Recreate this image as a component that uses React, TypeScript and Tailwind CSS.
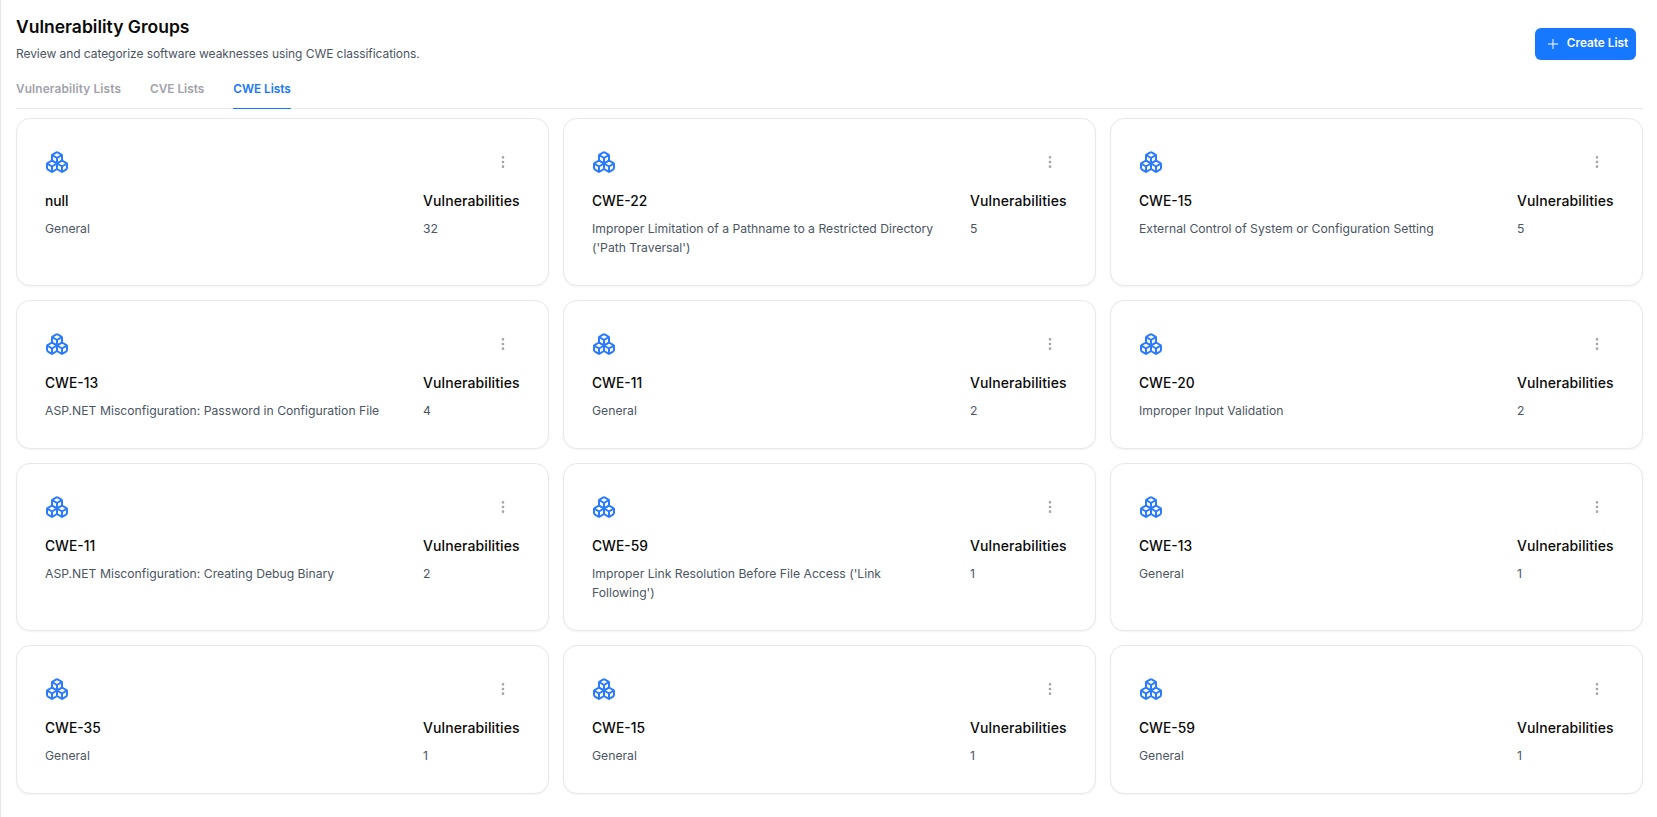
import { Boxes, MoreVertical, Plus } from "lucide-react";

interface CweCard {
  name: string;
  description: string;
  count: number;
}

const CARDS: CweCard[] = [
  { name: "null", description: "General", count: 32 },
  {
    name: "CWE-22",
    description:
      "Improper Limitation of a Pathname to a Restricted Directory ('Path Traversal')",
    count: 5,
  },
  {
    name: "CWE-15",
    description: "External Control of System or Configuration Setting",
    count: 5,
  },
  {
    name: "CWE-13",
    description: "ASP.NET Misconfiguration: Password in Configuration File",
    count: 4,
  },
  { name: "CWE-11", description: "General", count: 2 },
  { name: "CWE-20", description: "Improper Input Validation", count: 2 },
  {
    name: "CWE-11",
    description: "ASP.NET Misconfiguration: Creating Debug Binary",
    count: 2,
  },
  {
    name: "CWE-59",
    description:
      "Improper Link Resolution Before File Access ('Link Following')",
    count: 1,
  },
  { name: "CWE-13", description: "General", count: 1 },
  { name: "CWE-35", description: "General", count: 1 },
  { name: "CWE-15", description: "General", count: 1 },
  { name: "CWE-59", description: "General", count: 1 },
];

function Card({ card }: { card: CweCard }) {
  return (
    <div className="bg-white rounded-[14px] border border-[#e8e8e8] shadow-[0_1px_2px_rgba(0,0,0,0.05)] pt-[31px] pb-[28px] pl-[28px] pr-[29px]">
      {/* Header */}
      <div className="flex items-start justify-between h-[24px] mb-[15px]">
        <Boxes size={24} strokeWidth={2} className="text-[#2b7bff]" />
        <MoreVertical
          size={16}
          strokeWidth={2}
          className="text-[#a3a3ab] mr-[8px] mt-[4px]"
        />
      </div>

      {/* Body */}
      <div className="flex justify-between">
        <div className="w-[350px]">
          <p className="text-[13.8px] leading-[24px] font-medium text-[#0a0a0a]">
            {card.name}
          </p>
          <p className="text-[12.2px] leading-[19px] text-[#4b5563] mt-[6px]">
            {card.description}
          </p>
        </div>
        <div className="w-[96px]">
          <p className="text-[14px] tracking-[0.1px] leading-[24px] font-medium text-[#0a0a0a] whitespace-nowrap">
            Vulnerabilities
          </p>
          <p className="text-[12.2px] leading-[19px] text-[#4b5563] mt-[6px]">
            {card.count}
          </p>
        </div>
      </div>
    </div>
  );
}

export default function App() {
  return (
    <div className="min-h-[817px] bg-white border-l border-[#e5e7eb] pl-[15px] pr-[14px] pt-[28px] font-['Inter',sans-serif]">
      {/* Header */}
      <div className="flex items-start justify-between pr-[7px]">
        <div>
          <h1 className="text-[17.5px] leading-[24px] font-semibold text-[#0a0a0a] -mt-[13px]">
            Vulnerability Groups
          </h1>
          <p className="text-[12px] tracking-[-0.06px] leading-[20px] text-[#4b5563] mt-[5px]">
            Review and categorize software weaknesses using CWE classifications.
          </p>
        </div>
        <button className="flex items-center gap-[6px] h-[32px] w-[101px] pl-[2px] justify-center rounded-[6px] bg-[#1677ff] text-white text-[11.8px] font-semibold">
          <Plus size={16} strokeWidth={1.5} />
          Create List
        </button>
      </div>

      {/* Tabs */}
      <div className="flex gap-[29px] border-b border-[#e8e8e8] h-[48px] -mt-[3px] text-[11.8px] font-semibold">
        <span className="text-[#a1a1aa] pt-[20px] tracking-[0.15px]">Vulnerability Lists</span>
        <span className="text-[#a1a1aa] pt-[20px]">CVE Lists</span>
        <span className="text-[#1677ff] pt-[20px] h-[48px] border-b border-[#1677ff]">
          CWE Lists
        </span>
      </div>

      {/* Cards */}
      <div className="grid grid-cols-3 gap-x-[14px] gap-y-[14px] mt-[9px]">
        {CARDS.map((card, i) => (
          <Card key={i} card={card} />
        ))}
      </div>
    </div>
  );
}
